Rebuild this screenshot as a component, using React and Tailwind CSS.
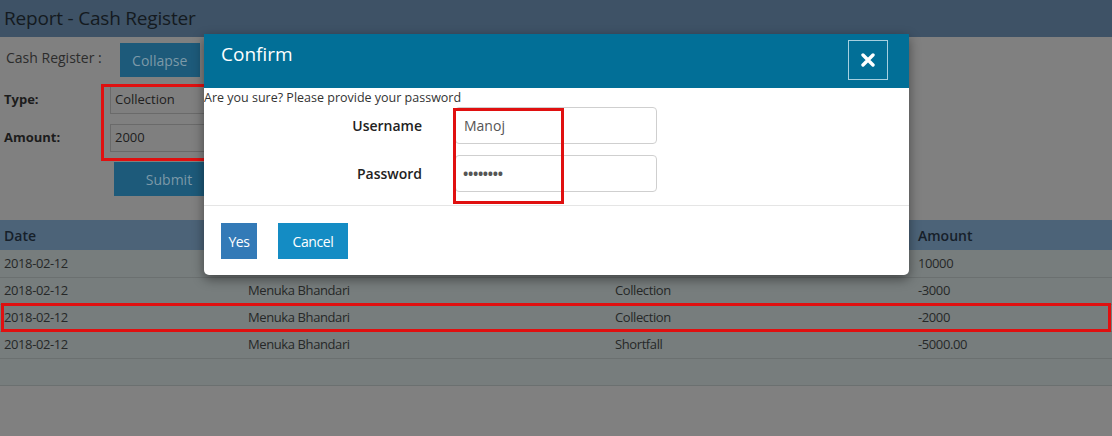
import React from 'react'

const rows = [
  { date: '2018-02-12', name: '', type: '', amount: '10000' },
  { date: '2018-02-12', name: 'Menuka Bhandari', type: 'Collection', amount: '-3000' },
  { date: '2018-02-12', name: 'Menuka Bhandari', type: 'Collection', amount: '-2000', marked: true },
  { date: '2018-02-12', name: 'Menuka Bhandari', type: 'Shortfall', amount: '-5000.00' },
]

const sans = { fontFamily: '"Open Sans", "DejaVu Sans", sans-serif' }
const narrow = { fontFamily: '"Open Sans", sans-serif', letterSpacing: '-0.4px' }

export default function App() {
  return (
    <div className="relative h-[436px] w-[1112px] overflow-hidden bg-[#808080]" style={sans}>
      {/* page under the dialog, already dimmed */}
      <div className="flex h-[37px] items-center bg-[#3e5266] pl-1">
        <h1 className="text-[19px] tracking-[-0.2px] text-[#141a20]">Report - Cash Register</h1>
      </div>

      <div className="flex h-[45px] items-center gap-[18px] pl-[6px] pt-[1px]">
        <span className="-mt-[6px] text-[14px] text-[#2c2c2c]">Cash Register :</span>
        <button className="h-[34px] w-[80px] bg-[#1d5a7a] text-[14px] text-[#7c99a8]">Collapse</button>
      </div>

      <div className="mt-[4px] flex flex-col gap-[10px]">
        <div className="flex items-center">
          <label className="w-[110px] pl-1 text-[13px] font-bold text-[#1c1c1c]">Type:</label>
          <div className="flex h-[28px] w-[110px] items-center border border-[#6a6a6a] bg-[#7f7f7f] pl-1 text-[13px] text-[#202020]">Collection</div>
        </div>
        <div className="flex items-center">
          <label className="w-[110px] pl-1 text-[13px] font-bold text-[#1c1c1c]">Amount:</label>
          <div className="flex h-[28px] w-[110px] items-center border border-[#6a6a6a] bg-[#7f7f7f] pl-1 text-[13px] text-[#202020]">2000</div>
        </div>
        <div className="pl-[114px]">
          <button className="h-[34px] w-[110px] bg-[#1d5a7a] text-[14px] text-[#7c99a8]">Submit</button>
        </div>
      </div>

      <table className="mt-[24px] w-full border-collapse text-left">
        <thead>
          <tr className="h-[30px] bg-[#4c6378] text-[14px] text-[#16202a]">
            <th className="w-[244px] pl-1 font-semibold">Date</th>
            <th className="w-[367px] pl-1 font-semibold"></th>
            <th className="w-[303px] pl-1 font-semibold"></th>
            <th className="pl-1 font-semibold">Amount</th>
          </tr>
        </thead>
        <tbody className="text-[13px] text-[#262828]" style={narrow}>
          {rows.map((row, i) => (
            <tr key={i} className="h-[27px] border-b border-[#6b7070] bg-[#777d7d]">
              <td className="pl-1">{row.date}</td>
              <td className="pl-1">{row.name}</td>
              <td className="pl-1">{row.type}</td>
              <td className="pl-1">{row.amount}</td>
            </tr>
          ))}
          <tr className="h-[27px] border-b border-[#6b7070] bg-[#777d7d]">
            <td colSpan={4}></td>
          </tr>
        </tbody>
      </table>

      {/* annotation boxes */}
      <div className="absolute left-[101px] top-[84px] h-[77px] w-[118px] border-[3px] border-[#e01010]" />
      <div className="absolute left-[1px] top-[303px] h-[29px] w-[1110px] border-[3px] border-[#e01010]" />

      {/* confirm dialog */}
      <div className="absolute left-[204px] top-[34px] w-[705px] overflow-hidden rounded-b-[5px] bg-white shadow-[0_4px_12px_rgba(0,0,0,0.45)]">
        <div className="flex h-[54px] items-start justify-between bg-[#026f97] pl-[17px] pr-[21px]">
          <h2 className="mt-[6px] text-[19px] text-white">Confirm</h2>
          <button className="mt-[6px] flex h-[40px] w-[40px] items-center justify-center border border-[#a6d0e0]">
            <svg width="14" height="14" viewBox="0 0 14 14">
              <path d="M2 2 L12 12 M12 2 L2 12" stroke="white" strokeWidth="3.4" strokeLinecap="round" />
            </svg>
          </button>
        </div>
        <div className="relative border-b border-[#e5e5e5] pb-[13px]">
          <p className="pt-[2px] text-[12.5px] leading-[16px] text-[#333]">Are you sure? Please provide your password</p>
          <div className="mt-[1px] flex flex-col gap-[11px]">
            <div className="flex items-center">
              <label className="w-[218px] text-right text-[14px] font-semibold text-[#222]">Username</label>
              <div className="ml-[33px] flex h-[37px] w-[202px] items-center rounded-[4px] border border-[#cfcfcf] pl-[8px] text-[14px] text-[#555]">Manoj</div>
            </div>
            <div className="flex items-center">
              <label className="w-[218px] text-right text-[14px] font-semibold text-[#222]">Password</label>
              <div className="ml-[33px] flex h-[37px] w-[202px] items-center rounded-[4px] border border-[#cfcfcf] pl-[7px] text-[14px] font-bold tracking-[-0.3px] text-[#555]">••••••••</div>
            </div>
          </div>
          <div className="absolute left-[249px] top-[20px] h-[96px] w-[111px] border-[3px] border-[#e01010]" />
        </div>
        <div className="flex gap-[21px] px-[17px] pb-[16px] pt-[17px]" style={narrow}>
          <button className="h-[36px] w-[36px] bg-[#337ab7] text-[14px] text-white">Yes</button>
          <button className="h-[36px] w-[70px] bg-[#148cc4] text-[14px] text-white">Cancel</button>
        </div>
      </div>
    </div>
  )
}
